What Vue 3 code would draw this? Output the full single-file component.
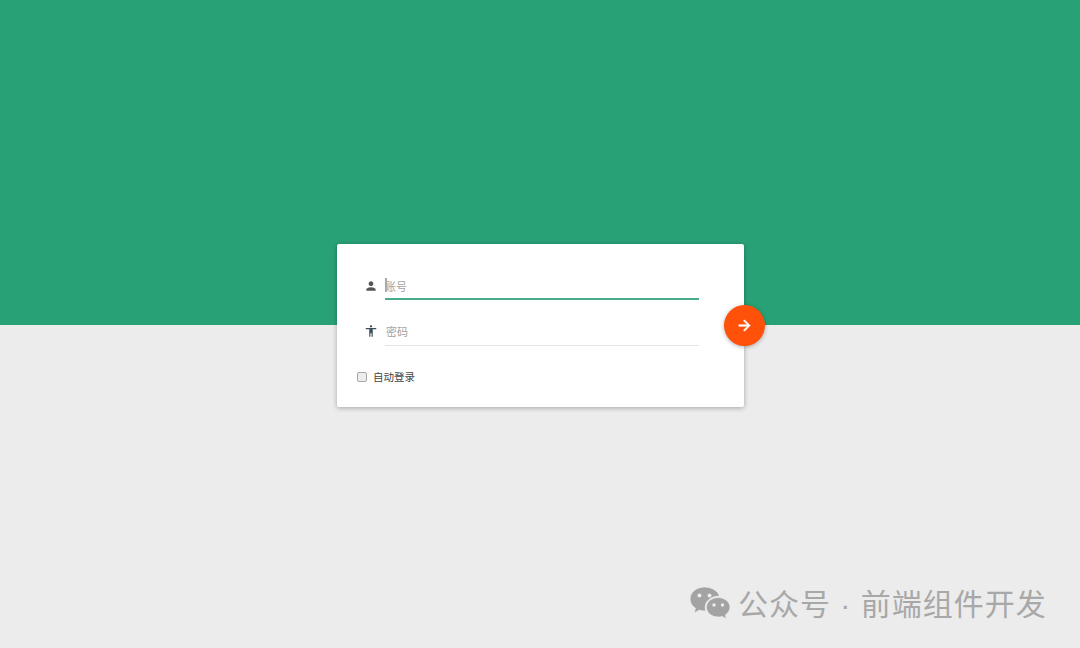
<template>
  <div class="page">
    <div class="band-top"></div>
    <div class="band-bottom"></div>

    <!-- Login card -->
    <div class="login-wrap">
      <form class="login-card" @submit.prevent>
        <div class="field">
          <svg class="field-icon" viewBox="0 0 24 24">
            <path d="M12 12c2.21 0 4-1.79 4-4s-1.79-4-4-4-4 1.79-4 4 1.79 4 4 4zm0 2c-2.67 0-8 1.34-8 4v2h16v-2c0-2.66-5.33-4-8-4z" />
          </svg>
          <div class="field-box active">
            <span class="caret"></span>
            <input v-model="account" type="text" placeholder="账号" />
          </div>
        </div>
        <div class="field second">
          <svg class="field-icon" viewBox="0 0 24 24">
            <path d="M12 2c1.1 0 2 .9 2 2s-.9 2-2 2-2-.9-2-2 .9-2 2-2zm9 7h-6v13h-2v-6h-2v6H9V9H3V7h18v2z" />
          </svg>
          <div class="field-box">
            <input v-model="password" type="password" placeholder="密码" />
          </div>
        </div>
        <label class="remember">
          <input v-model="remember" type="checkbox" />
          <span>自动登录</span>
        </label>
        <button class="go-btn" type="submit" aria-label="登录">
          <svg viewBox="0 0 24 24">
            <path d="M12 4l-1.41 1.41L16.17 11H4v2h12.17l-5.58 5.59L12 20l8-8z" />
          </svg>
        </button>
      </form>
    </div>

    <!-- Watermark -->
    <div class="watermark">
      <svg class="wechat" viewBox="0 0 42 36">
        <path class="bubble" d="M15.5 1C7.5 1 1 6.4 1 13c0 3.8 2.1 7 5.4 9.200L5 27l5.300-2.800c1.700.5 3.400.8 5.200.8h1.300c-.4-1.200-.6-2.400-.6-3.600 0-6.200 5.900-11.200 13.200-11.200h1.100C29.200 5 22.900 1 15.500 1z" />
        <circle class="eye" cx="10.500" cy="9.500" r="2" />
        <circle class="eye" cx="20.500" cy="9.500" r="2" />
        <path class="bubble" d="M41 21.300c0-5.400-5.300-9.800-11.800-9.800s-11.800 4.400-11.800 9.800 5.300 9.800 11.800 9.800c1.400 0 2.700-.2 4-.6l4.300 2.500-1.100-4.100c2.800-1.800 4.600-4.500 4.600-7.600z" />
        <circle class="eye" cx="25" cy="19" r="1.700" />
        <circle class="eye" cx="33.500" cy="19" r="1.700" />
      </svg>
      <span>公众号 · 前端组件开发</span>
    </div>
  </div>
</template>

<script setup>
import { ref } from 'vue'

const account = ref('')
const password = ref('')
const remember = ref(false)
</script>

<style>
html, body {
  margin: 0;
  height: 100%;
}
#app {
  height: 100%;
}
</style>

<style scoped>
.page {
  position: relative;
  height: 648px;
  display: flex;
  flex-direction: column;
  overflow: hidden;
  font-family: "Liberation Sans", "Noto Sans CJK SC", sans-serif;
}
.band-top {
  height: 325px;
  background: #29a176;
}
.band-bottom {
  flex: 1;
  background: #ececec;
}

.login-wrap {
  position: absolute;
  left: 337px;
  top: 244px;
}
.login-card {
  position: relative;
  box-sizing: border-box;
  width: 407px;
  height: 163px;
  padding: 27px 45px 0 20px;
  background: #fff;
  border-radius: 2px;
  box-shadow: 0 1px 5px rgba(0, 0, 0, 0.3);
}

/* Fields */
.field {
  display: flex;
  align-items: flex-start;
  padding-left: 7px;
}
.field.second {
  margin-top: 17px;
}
.field-icon {
  width: 14px;
  height: 14px;
  margin-top: 8px;
  margin-right: 7px;
  fill: #555;
  flex: none;
}
.field.second .field-icon {
  fill: #3c4f5c;
  margin-top: 7px;
}
.field-box {
  position: relative;
  flex: 1;
  height: 28px;
  border-bottom: 1px solid #e4e4e4;
}
.field-box.active {
  height: 27px;
  border-bottom: 2px solid #47ad8a;
}
.field-box input {
  display: block;
  width: 100%;
  height: 100%;
  box-sizing: border-box;
  padding: 2px 0 0 1px;
  border: none;
  outline: none;
  background: transparent;
  font-family: inherit;
  font-size: 11px;
  color: #333;
}
.field-box.active input {
  padding: 4px 0 0;
}
.field-box input::placeholder {
  color: #a3a3a3;
  opacity: 1;
}
.caret {
  position: absolute;
  left: 0;
  top: 7px;
  width: 2px;
  height: 14px;
  background: #aaa;
}

/* Remember */
.remember {
  display: flex;
  align-items: center;
  margin-top: 23px;
  font-size: 10.5px;
  color: #444;
}
.remember input {
  appearance: none;
  box-sizing: border-box;
  width: 10px;
  height: 10px;
  margin: 0 6px 0 0;
  background: #ededed;
  border: 1px solid #a8a8a8;
  border-radius: 2px;
}

/* Round button */
.go-btn {
  position: absolute;
  right: -21px;
  top: 61px;
  width: 41px;
  height: 41px;
  padding: 0;
  display: flex;
  align-items: center;
  justify-content: center;
  border: none;
  border-radius: 50%;
  background: #ff5109;
  box-shadow: 0 1px 4px rgba(0, 0, 0, 0.3);
}
.go-btn svg {
  width: 17px;
  height: 17px;
  fill: #fff;
  stroke: #fff;
  stroke-width: 0.9;
}

/* Watermark */
.watermark {
  position: absolute;
  left: 689px;
  top: 586px;
  display: flex;
  align-items: center;
  gap: 7px;
  line-height: 36px;
  color: #a8a8a8;
  white-space: nowrap;
}
.watermark span {
  font-size: 30px;
  letter-spacing: 1px;
  position: relative;
  top: 1px;
}
.wechat {
  width: 42px;
  height: 36px;
  flex: none;
}
.bubble {
  fill: #a3a3a3;
  stroke: #ececec;
  stroke-width: 0.8;
}
.eye {
  fill: #ececec;
}
</style>
